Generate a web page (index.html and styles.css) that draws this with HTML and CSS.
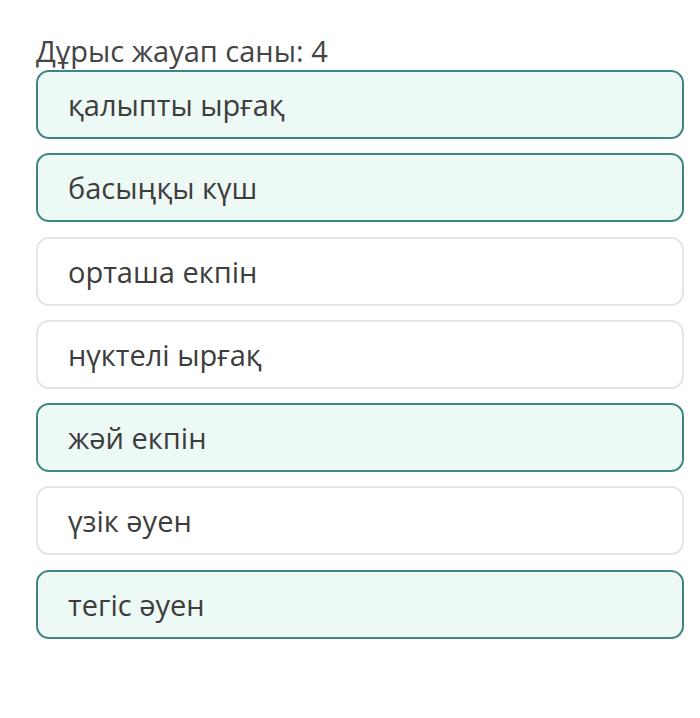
FILE: index.html
```html
<!DOCTYPE html>
<html lang="kk">
<head>
<meta charset="utf-8">
<link rel="stylesheet" href="styles.css">
</head>
<body>
<div class="quiz">
  <div class="title">Дұрыс жауап саны: 4</div>
  <ul class="options">
    <li class="option selected">қалыпты ырғақ</li>
    <li class="option selected">басыңқы күш</li>
    <li class="option">орташа екпін</li>
    <li class="option">нүктелі ырғақ</li>
    <li class="option selected">жәй екпін</li>
    <li class="option">үзік әуен</li>
    <li class="option selected">тегіс әуен</li>
  </ul>
</div>
</body>
</html>
```

FILE: styles.css
```css
html, body {
  margin: 0;
  padding: 0;
  background: #ffffff;
}
.quiz {
  font-family: "Open Sans", "Noto Sans", sans-serif;
  color: #3c3c3c;
  padding: 32px 16px 0 36px;
}
.title {
  font-size: 29px;
  line-height: 38px;
  height: 38px;
  color: #444444;
}
.options {
  list-style: none;
  margin: 0;
  padding: 0;
  display: flex;
  flex-direction: column;
  gap: 14.3px;
}
.option {
  box-sizing: border-box;
  height: 69px;
  border: 2px solid #e3e6e6;
  border-radius: 13px;
  background: #ffffff;
  display: flex;
  align-items: center;
  padding-left: 30px;
  font-size: 29px;
  color: #3d3d3d;
}
.option.selected {
  border-color: #3e8683;
  background: #edf9f5;
}
```
